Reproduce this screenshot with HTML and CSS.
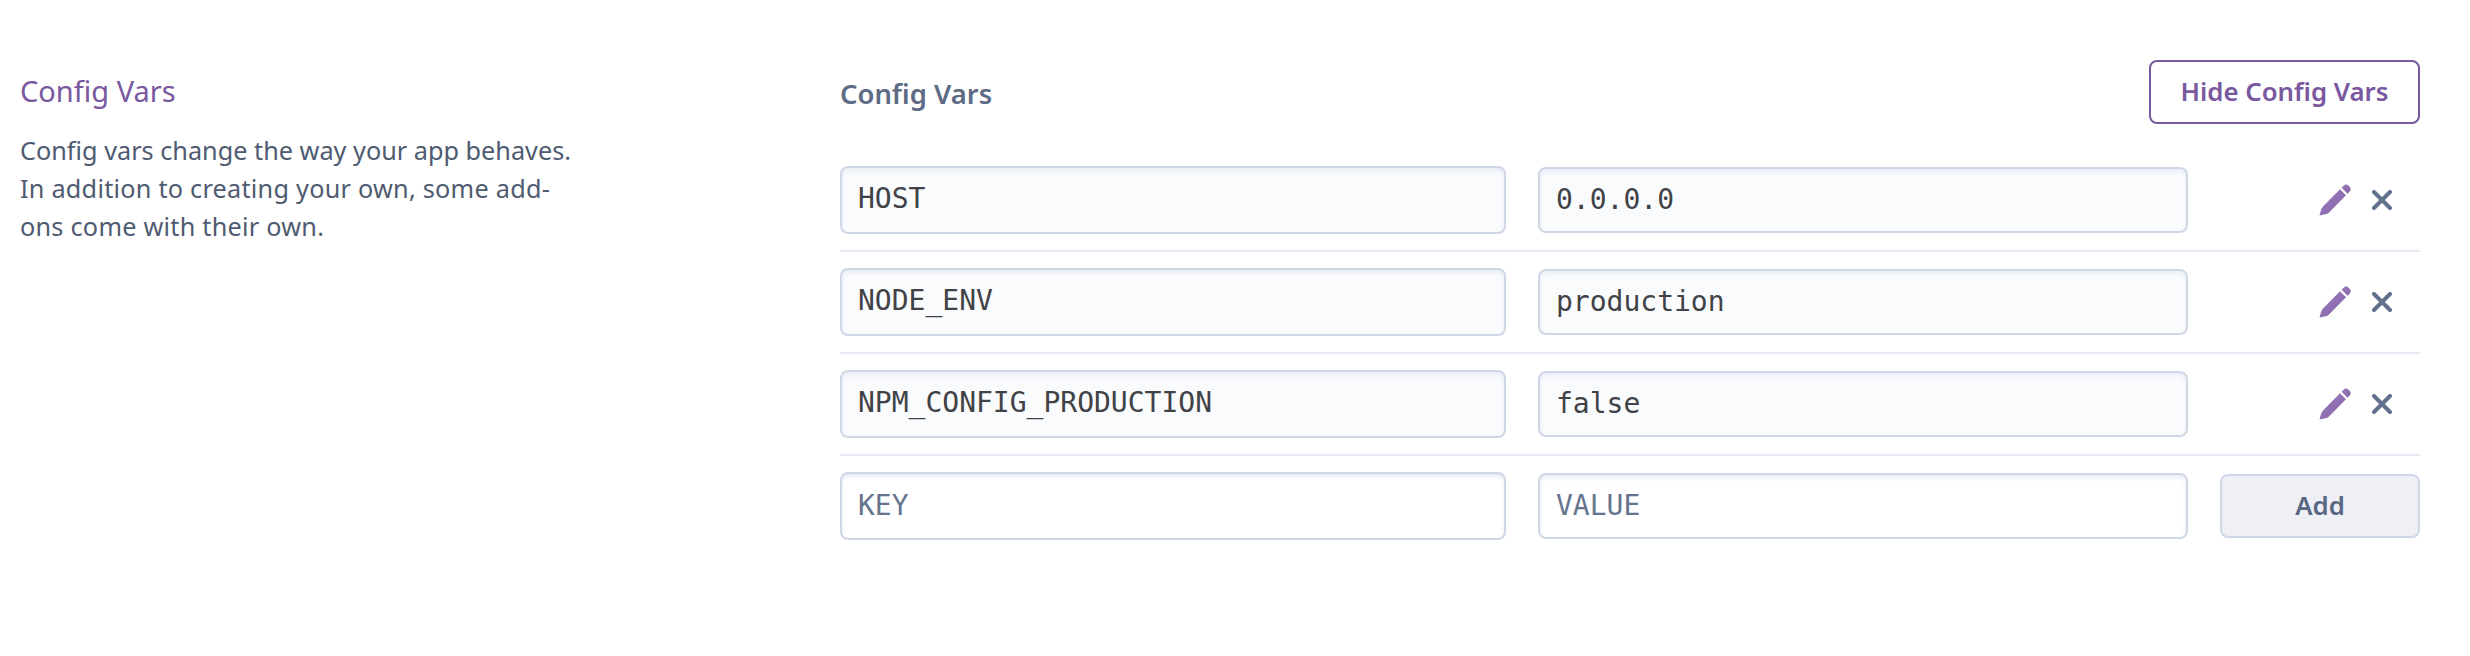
FILE: index.html
```
<!DOCTYPE html>
<html lang="en">
<head>
<meta charset="utf-8">
<title>Config Vars</title>
<link rel="stylesheet" href="styles.css">
</head>
<body>
<svg class="sprite" aria-hidden="true">
  <defs>
    <linearGradient id="violet" x1="0" y1="0" x2="1" y2="1">
      <stop offset="0" stop-color="#9b7bbd"/>
      <stop offset="1" stop-color="#8663a8"/>
    </linearGradient>
  </defs>
  <symbol id="pencil" viewBox="0 0 32 32">
    <path fill="url(#violet)" d="M0.5 31.4 2 26Q2.6 24 4 22.4L21 5.2 27 11.2 10 28.4Q8.6 29.8 6.6 30.2Z"/>
    <path fill="url(#violet)" d="M22.6 3.8 24.3 2.1Q27-.8 29.8 2L30.4 2.6Q33 5.4 30.3 8L28.5 9.7Z"/>
  </symbol>
  <symbol id="cross" viewBox="0 0 20 20">
    <path d="M2 2 18 18M18 2 2 18" fill="none" stroke="#62718c" stroke-width="4" stroke-linecap="round"/>
  </symbol>
</svg>
<main class="settings">
  <aside class="intro">
    <h2 class="intro-title">Config Vars</h2>
    <p class="intro-text">Config vars change the way your app behaves. <span class="loose">In addition to creating your own, some add-<br>ons come with their own.</span></p>
  </aside>
  <section class="vars">
    <header class="vars-head">
      <h3 class="vars-title">Config Vars</h3>
      <button class="btn btn-outline">Hide Config Vars</button>
    </header>
    <div class="row">
      <div class="field key">HOST</div>
      <div class="field value">0.0.0.0</div>
      <div class="actions"><svg class="pencil"><use href="#pencil"/></svg><svg class="cross"><use href="#cross"/></svg></div>
    </div>
    <div class="row">
      <div class="field key">NODE_ENV</div>
      <div class="field value">production</div>
      <div class="actions"><svg class="pencil"><use href="#pencil"/></svg><svg class="cross"><use href="#cross"/></svg></div>
    </div>
    <div class="row">
      <div class="field key">NPM_CONFIG_PRODUCTION</div>
      <div class="field value">false</div>
      <div class="actions"><svg class="pencil"><use href="#pencil"/></svg><svg class="cross"><use href="#cross"/></svg></div>
    </div>
    <div class="row row-new">
      <div class="field key empty">KEY</div>
      <div class="field value empty">VALUE</div>
      <button class="btn btn-add">Add</button>
    </div>
  </section>
</main>
</body>
</html>
```

FILE: styles.css
```
* { box-sizing: border-box; }

body {
  margin: 0;
  background: #fff;
  font-family: "Noto Sans", "Open Sans", sans-serif;
}

.sprite { position: absolute; width: 0; height: 0; }

.settings {
  display: grid;
  grid-template-columns: 600px 1580px;
  column-gap: 220px;
  padding: 60px 50px 0 20px;
}

.intro-title {
  margin: 11px 0 0;
  font-size: 29px;
  font-weight: 400;
  line-height: 40px;
  color: #79589f;
}

.intro-text {
  width: 570px;
  margin: 20px 0 0;
  font-size: 25.25px;
  line-height: 38px;
  color: #4f5b70;
}

.loose { letter-spacing: 0.24px; }

.vars-head {
  display: flex;
  justify-content: space-between;
  height: 64px;
  margin-bottom: 42px;
}

.vars-title {
  margin: 14px 0 0;
  font-size: 27.4px;
  font-weight: 600;
  line-height: 40px;
  color: #5d6b84;
}

.btn {
  height: 64px;
  padding: 0 0 2px;
  border: 2px solid;
  border-radius: 8px;
  font: 600 25.8px/58px "Noto Sans", "Open Sans", sans-serif;
}

.btn-outline {
  width: 271px;
  border-color: #79589f;
  background: #fff;
  color: #79589f;
}

.btn-add {
  width: 200px;
  border-color: #cfd7e6;
  background: #eff0f6;
  color: #5a6780;
}

.row {
  display: grid;
  grid-template-columns: 666px 650px 200px;
  column-gap: 32px;
  align-items: center;
  height: 86px;
  margin-bottom: 16px;
  padding-bottom: 16px;
  border-bottom: 2px solid #e6eaf2;
}

.row-new {
  height: 68px;
  padding-bottom: 0;
  border-bottom: 0;
}

.field {
  padding-left: 16px;
  border: 2px solid #cfd7e6;
  border-radius: 8px;
  background: #fafbfd;
  box-shadow: inset 0 3px 4px #e9edf5;
  font: 28px/62px "DejaVu Sans Mono", monospace;
  color: #414246;
}

.key { height: 68px; }

.value { height: 66px; line-height: 61px; }

.empty {
  background: #fff;
  line-height: 64px;
  color: #66758f;
}

.value.empty { line-height: 61px; }

.actions {
  display: flex;
  align-items: center;
  justify-content: flex-end;
  gap: 21px;
  padding-right: 28px;
}

.pencil { width: 32px; height: 32px; }

.cross { width: 20px; height: 20px; }
```
